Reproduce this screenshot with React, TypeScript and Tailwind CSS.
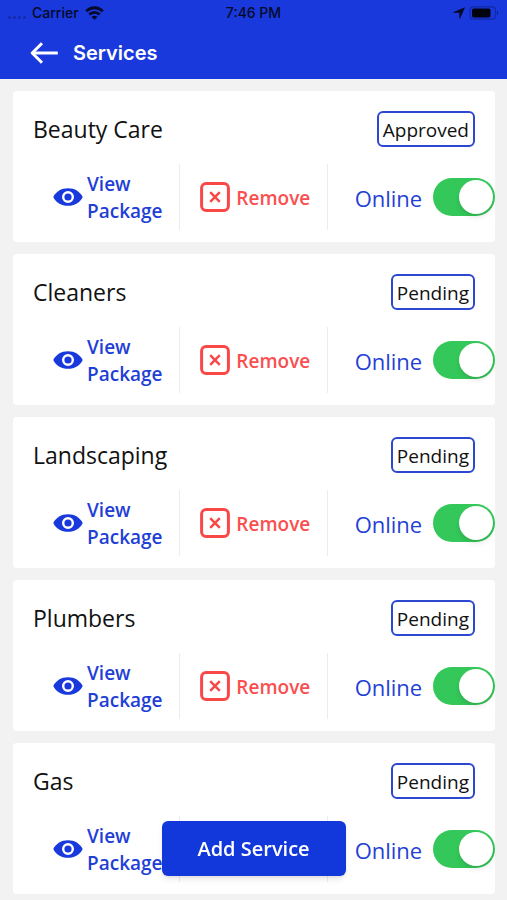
interface Service {
    id: string;
    name: string;
    status: 'Approved' | 'Pending';
    online: boolean;
}

const services: Service[] = [
    { id: 'beauty-care', name: 'Beauty Care', status: 'Approved', online: true },
    { id: 'cleaners', name: 'Cleaners', status: 'Pending', online: true },
    { id: 'landscaping', name: 'Landscaping', status: 'Pending', online: true },
    { id: 'plumbers', name: 'Plumbers', status: 'Pending', online: true },
    { id: 'gas', name: 'Gas', status: 'Pending', online: true },
];

function WifiIcon() {
    return (
        <svg className="h-[14px] w-[19px]" viewBox="0 0 19 14" fill="none" stroke="#050a2a" aria-hidden="true">
            <path d="M1.2 5.2C5.9 .6 13.1 .6 17.8 5.2" strokeWidth="2.8" />
            <path d="M4.3 8.5C7.2 5.6 11.8 5.6 14.7 8.5" strokeWidth="2.6" />
            <path d="M9.5 13.8L6.5 10.9C8.1 9.4 10.9 9.4 12.5 10.9Z" fill="#050a2a" stroke="none" />
        </svg>
    );
}

function LocationIcon() {
    return (
        <svg className="h-3 w-3" viewBox="0 0 12 12" fill="#050a2a" aria-hidden="true">
            <path d="M11.3 .4C11.7 .2 12 .5 11.8 .9L7.2 11.3C7 11.8 6.3 11.7 6.3 11.1V6.2C6.3 5.9 6.2 5.8 5.9 5.8H.9C.3 5.8 .2 5.1 .7 4.9Z" />
        </svg>
    );
}

function BatteryIcon() {
    return (
        <svg className="h-[14px] w-[30px]" viewBox="0 0 30 14" aria-hidden="true">
            <rect x="1" y=".8" width="25.5" height="12.4" rx="3.4" fill="none" stroke="#1029a4" strokeWidth="1.2" />
            <rect x="3" y="2.4" width="18.5" height="9.2" rx="1.8" fill="#01030f" />
            <path d="M28 5C29.5 5.4 29.5 8.6 28 9Z" fill="#0d1f80" />
        </svg>
    );
}

function BackIcon() {
    return (
        <svg className="h-[22px] w-7" viewBox="0 0 28 22" fill="none" stroke="#fff" strokeWidth="3" aria-hidden="true">
            <path d="M27.8 11H2.5" />
            <path d="M12 1.2L2.2 11L12 20.8" strokeLinejoin="round" />
        </svg>
    );
}

function EyeIcon() {
    return (
        <svg className="h-5 w-[30px] shrink-0" viewBox="0 0 30 20" aria-hidden="true">
            <path
                fill="#1939dc"
                fillRule="evenodd"
                d="M15 1.2C8.4 1.2 2.8 4.6 .3 10C2.8 15.4 8.4 18.8 15 18.8S27.2 15.4 29.7 10C27.2 4.6 21.6 1.2 15 1.2ZM15 16A6 6 0 1 1 15 4A6 6 0 0 1 15 16ZM15 13.6A3.6 3.6 0 1 0 15 6.4A3.6 3.6 0 0 0 15 13.6Z"
            />
        </svg>
    );
}

function RemoveIcon() {
    return (
        <svg className="h-[30px] w-[30px] shrink-0" viewBox="0 0 30 30" fill="none" stroke="#f94848" aria-hidden="true">
            <rect x="1.6" y="1.6" width="26.8" height="26.8" rx="4.5" strokeWidth="3" />
            <path d="M10.2 10.2L19.8 19.8M19.8 10.2L10.2 19.8" strokeWidth="2.5" />
        </svg>
    );
}

function StatusBar() {
    return (
        <div className="grid h-[26px] grid-cols-3 items-center font-['Inter',sans-serif] text-sm font-medium text-[#050a2a]">
            <div className="flex items-center gap-[6px] pl-2">
                <div className="flex gap-[2px] pt-2" aria-hidden="true">
                    <span className="h-[3px] w-[3px] rounded-full bg-[#132cab]" />
                    <span className="h-[3px] w-[3px] rounded-full bg-[#132cab]" />
                    <span className="h-[3px] w-[3px] rounded-full bg-[#132cab]" />
                    <span className="h-[3px] w-[3px] rounded-full bg-[#132cab]" />
                </div>
                <span>Carrier</span>
                <WifiIcon />
            </div>
            <span className="text-center">7:46 PM</span>
            <div className="flex items-center justify-end gap-1 pr-2">
                <LocationIcon />
                <BatteryIcon />
            </div>
        </div>
    );
}

function ServiceCard({ service }: { service: Service }) {
    return (
        <li className="rounded-sm bg-white px-5 pt-5 pb-3">
            <div className="flex h-9 items-center justify-between">
                <h2 className="text-[23px] text-[#111]">{service.name}</h2>
                <span className="flex h-9 items-center rounded-[6px] border-2 border-[#2c48d0] px-1 pt-[2px] text-[19px] text-[#111]">
                    {service.status}
                </span>
            </div>

            <div className="mt-[17px] grid h-[66px] grid-cols-3 divide-x divide-[#ececec]">
                <button type="button" className="flex items-center gap-1 pl-5 text-left text-[19px] leading-[27px] font-semibold text-[#1f3fd6]">
                    <EyeIcon />
                    <span className="pt-[2px]">View Package</span>
                </button>
                <button type="button" className="flex items-center gap-[6px] pl-5 text-[19px] font-semibold text-[#f94f4f]">
                    <RemoveIcon />
                    <span className="pt-[2px]">Remove</span>
                </button>
                {/* The switch runs out to the edge of the card */}
                <div className="-mr-5 flex items-center justify-between pl-[27px]">
                    <label htmlFor={service.id} className="pt-[2px] text-[22px] text-[#1f3fd6]">Online</label>
                    <input
                        id={service.id}
                        type="checkbox"
                        role="switch"
                        defaultChecked={service.online}
                        className="flex h-[38px] w-[62px] shrink-0 appearance-none items-center rounded-full bg-gray-300 p-[2px] before:h-[34px] before:w-[34px] before:rounded-full before:bg-white before:shadow-md before:content-[''] checked:justify-end checked:bg-[#34c759]"
                    />
                </div>
            </div>
        </li>
    );
}

export default function App() {
    return (
        <div className="min-h-screen bg-[#f2f2f2] font-['Open_Sans','Noto_Sans',sans-serif]">
            <header className="bg-[#1939dc]">
                <StatusBar />
                <div className="flex h-[53px] items-center gap-[15px] pl-[30px]">
                    <button type="button" aria-label="Back">
                        <BackIcon />
                    </button>
                    <h1 className="font-['Inter',sans-serif] text-xl font-semibold text-white">Services</h1>
                </div>
            </header>

            <main className="pt-3 pr-3 pl-[13px]">
                <ul className="flex flex-col gap-3">
                    {services.map((service) => (
                        <ServiceCard key={service.id} service={service} />
                    ))}
                </ul>
            </main>

            <div className="fixed inset-x-0 bottom-6 flex justify-center">
                <button type="button" className="h-[55px] w-[184px] rounded-[6px] bg-[#1238dc] text-xl font-semibold text-white shadow-md">
                    Add Service
                </button>
            </div>
        </div>
    );
}
